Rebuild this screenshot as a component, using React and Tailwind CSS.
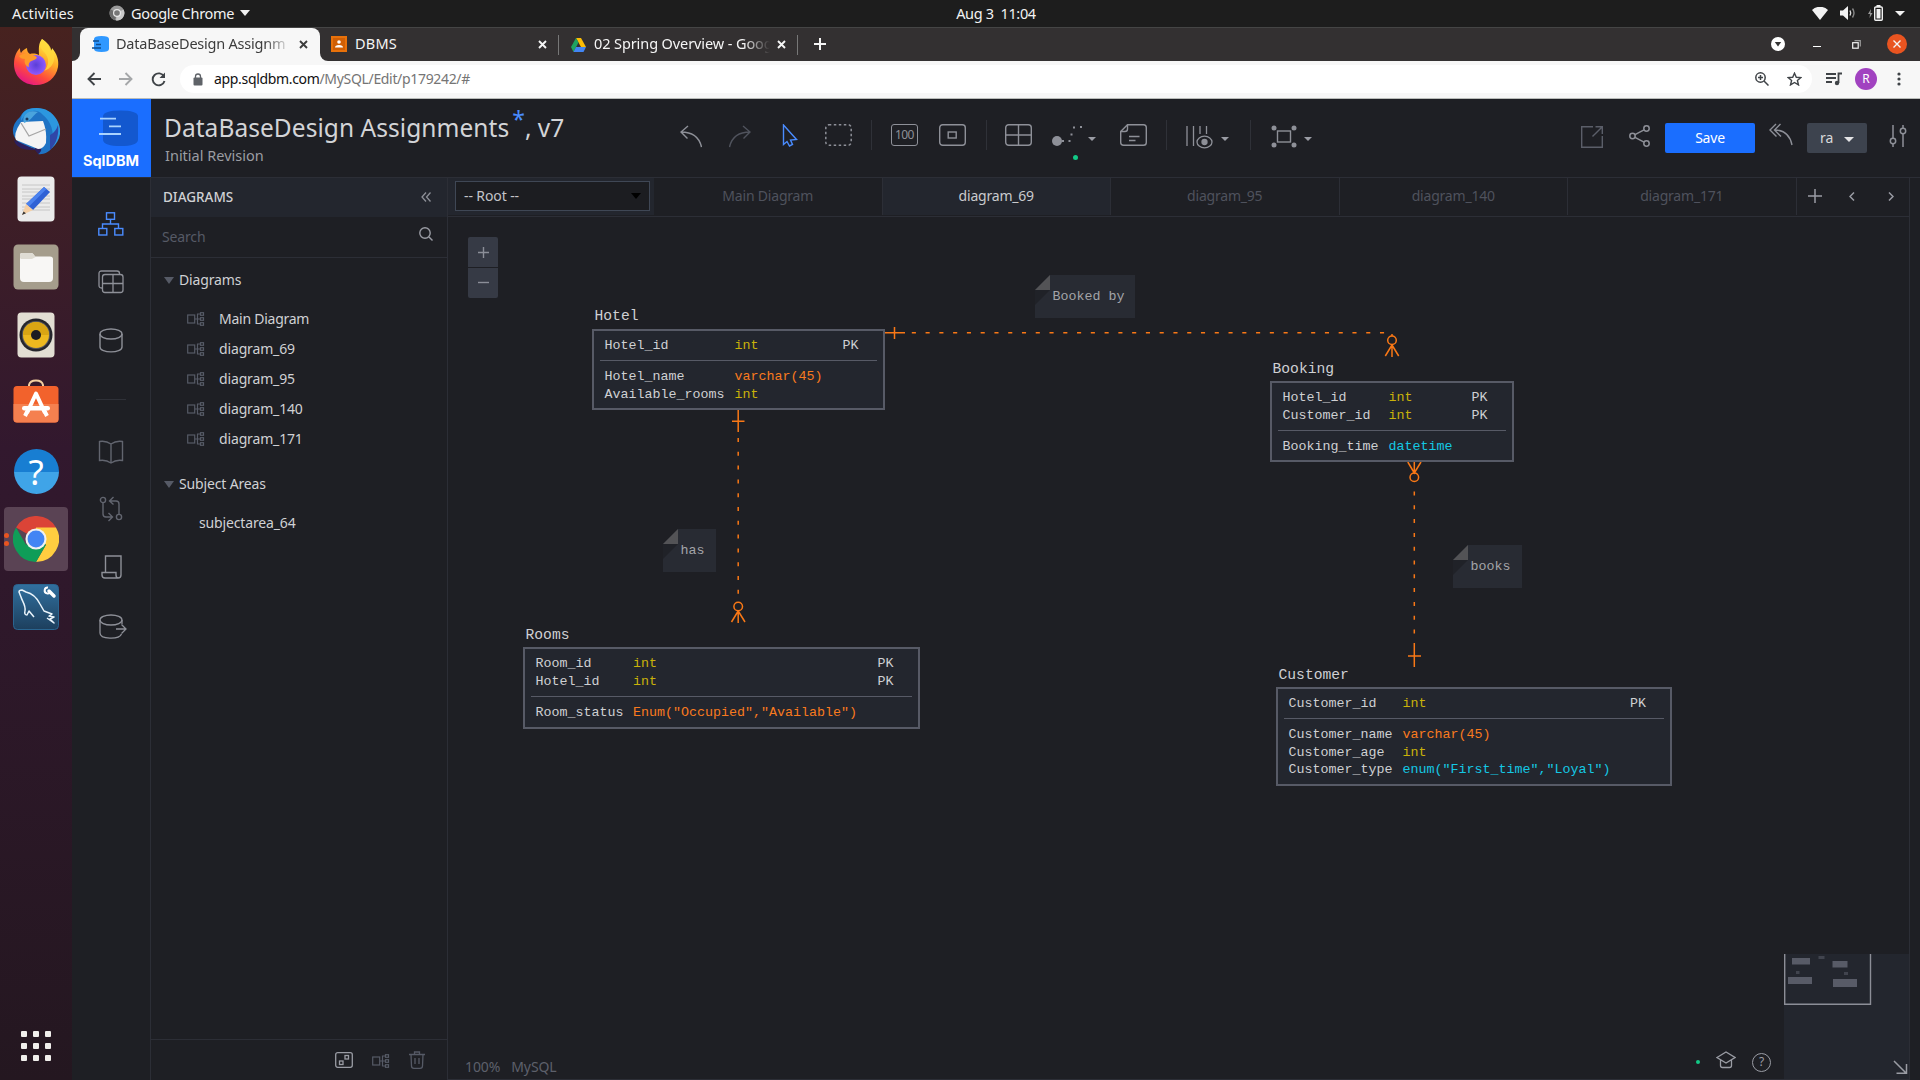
import React from "react";

const Svg = ({ w, h, className = "", children, sw = 1.4, vb }) => (
  <svg
    width={w}
    height={h}
    viewBox={vb || `0 0 ${w} ${h}`}
    fill="none"
    stroke="currentColor"
    strokeWidth={sw}
    className={"shrink-0 " + className}
  >
    {children}
  </svg>
);

/* ---------- System top bar ---------- */

function TopBar() {
  return (
    <div className="grid h-[27px] grid-cols-3 items-center bg-[#1d1d1d] pb-px text-[14.5px] leading-none text-[#f2f2f2]">
      <div className="flex items-center">
        <span className="ml-3 w-[97px] tracking-[0.15px]">Activities</span>
        <Svg w={16} h={16} sw={0}>
          <circle cx="8" cy="8" r="7.5" fill="#9a9a9a" />
          <path d="M8 8 1.5 4.2A7.5 7.5 0 0 0 6 15.2Z" fill="#6c6c6c" />
          <path d="M8 8 14.5 4.5A7.5 7.5 0 0 1 7 15.4Z" fill="#c9c9c9" />
          <circle cx="8" cy="8" r="4" fill="#e8e8e8" />
          <circle cx="8" cy="8" r="2.8" fill="#777" />
        </Svg>
        <span className="ml-1.5 w-[109px] whitespace-nowrap tracking-[-0.3px]">Google Chrome</span>
        <Svg w={10} h={6} sw={0}>
          <path d="M0 0H10L5 6Z" fill="#f2f2f2" />
        </Svg>
      </div>
      <div className="flex justify-center">
        <span className="ml-[72px] whitespace-pre tracking-[-0.35px]">Aug 3  11:04</span>
      </div>
      <div className="flex items-center justify-end pr-[15px]">
        <Svg w={16} h={13} sw={0}>
          <path d="M8 13 0 3A11.5 11.5 0 0 1 16 3Z" fill="#f2f2f2" />
        </Svg>
        <Svg w={16} h={14} className="ml-[12px]">
          <path d="M0 4.5H3L8 0V14L3 9.500H0Z" fill="#f2f2f2" stroke="none" />
          <path d="M10 4.500Q11.500 7 10 9.500" stroke="#ddd" />
          <path d="M12.500 2.500Q15.500 7 12.500 11.500" stroke="#888" />
        </Svg>
        <Svg w={16} h={16} className="ml-[12px]">
          <path d="M3 4 0 9H2L1.500 13 4.500 8H2.500Z" fill="#999" stroke="none" />
          <rect x="6.700" y="2" width="7.600" height="13.300" rx="1" stroke="#f2f2f2" />
          <path d="M8.500 4H12.500V13.500H8.500ZM8.500 0H12.500V2H8.500Z" fill="#f2f2f2" stroke="none" />
        </Svg>
        <Svg w={10} h={5} sw={0} className="ml-[11px]">
          <path d="M0 0H10L5 5Z" fill="#f2f2f2" />
        </Svg>
      </div>
    </div>
  );
}

/* ---------- Dock ---------- */

const Firefox = () => (
  <Svg w={46} h={48} sw={0} vb="0 0 46 48" className="-mt-[2px]">
    <defs>
      <linearGradient id="ffx" x1=".8" y1=".1" x2=".3" y2="1">
        <stop offset="0" stopColor="#fff14a" />
        <stop offset=".35" stopColor="#ffab27" />
        <stop offset=".7" stopColor="#ff4a3d" />
        <stop offset="1" stopColor="#e31587" />
      </linearGradient>
      <radialGradient id="ffp">
        <stop offset="0" stopColor="#5b3fd6" />
        <stop offset="1" stopColor="#9059ff" />
      </radialGradient>
    </defs>
    <path
      d="M29 1c6 4 8 8 9 12 1-1 1-2 1-3 5 6 7 12 6 19-2 11-11 18-22 18C10 47 1 38 1 26 1 19 3 14 7 10c0 2 0 3 1 5 2-3 4-4 6-5 0 3 1 5 3 6 4-1 7 0 9 1 0-6-1-11 3-16Z"
      fill="url(#ffx)"
    />
    <circle cx="23" cy="27" r="10" fill="url(#ffp)" />
    <path d="M6 18c5-4 12-2 16 0 3 1 2 3-1 4-4 1-6 3-5 7-4-1-5-5-4-8-3 0-5-1-6-3Z" fill="#ff9a28" />
    <path d="M29 1c-3 5-2 9 2 13 6 6 5 14 0 19 9-3 14-13 7-22C37 7 33 4 29 1Z" fill="#ffd93c" opacity=".8" />
  </Svg>
);

const Thunderbird = () => (
  <Svg w={48} h={48} sw={0} vb="0 0 48 48">
    <path d="M17 2C25-1 38 2 44 12c6 12 3 22-4 29-3 4-9 7-14 6 2-3-2-5-7-6C7 38 0 31 1 22c1-6 4-9 7-12 2-4 5-7 9-8Z" fill="#1f73c4" />
    <path d="M9 14C14 4 24 0 31 8c8 7 12 16 9 33 8-7 11-17 5-28C39 2 28-1 17 2 11 4 9 8 9 14Z" fill="#2c97df" />
    <path d="M38 28c4-2 7-6 8-10 1 9-1 18-8 25Z" fill="#2f46a8" />
    <path d="M2 33 22 42 27 39C31 41 29 46 26 47L23 43C14 43 4 42 2 33Z" fill="#2b1f5e" />
    <path d="m9 15 22-1q4 10 3 22-3 6-8 6L4 33Q1 27 9 15Z" fill="#f4f4f4" />
    <path d="m9 16 8 13 17-7" fill="none" stroke="#a6a6a6" strokeWidth="1.300" />
    <path d="M13 8c4-5 9-4 13-3-5 3-7 9-14 11-1-3-1-5 1-8Z" fill="#4aa4dd" />
    <circle cx="15" cy="12" r="1.500" fill="#17395f" />
  </Svg>
);

const Editor = () => (
  <Svg w={38} h={46} sw={0}>
    <rect x=".5" y=".5" width="37" height="45" rx="4" fill="#ebebeb" />
    {[9, 13, 16, 20, 23, 27, 31, 34].map((y) => (
      <path key={y} d={`M5 ${y}H33`} stroke="#c6c6c6" strokeWidth="1" />
    ))}
    <path d="M27 11 33 16 16 34 9 28Z" fill="#2f61d5" />
    <path d="M27 11 29.500 13 12 30.500 9 28Z" fill="#4b82ee" />
    <path d="M9 28 16 34 5 39Z" fill="#f4cfa6" />
    <path d="M6.500 35.500 9 37.300 5 39Z" fill="#333" />
  </Svg>
);

const Files = () => (
  <Svg w={46} h={46} sw={0}>
    <rect x=".5" y=".5" width="45" height="45" rx="4.500" fill="#a59d8c" />
    <path d="M7 11Q7 9 9 9H18Q20 9 21 11L22 12.500H37Q40 12.500 40 15V34Q40 38 36 38H11Q7 38 7 34Z" fill="#f8f7f5" />
    <path d="M7 14V11Q7 9 9 9H18Q20 9 21 11L22.500 13 19 15H8Z" fill="#dfdcd3" />
  </Svg>
);

const Rhythmbox = () => (
  <Svg w={38} h={46} sw={0}>
    <rect x=".5" y=".5" width="37" height="45" rx="4" fill="#e2ded3" />
    <circle cx="19" cy="23" r="16.500" fill="#25262c" />
    <circle cx="19" cy="23" r="14" fill="#5a5a5e" />
    <circle cx="19" cy="23" r="13" fill="#edb91f" />
    <path d="M6 23a13 13 0 0 1 26 0Z" fill="#d9a514" />
    <circle cx="19" cy="23" r="5" fill="#1c1d22" />
  </Svg>
);

const Software = () => (
  <Svg w={46} h={44} sw={0} className="-mt-[4px]">
    <path d="M16 9V6Q17 1.500 23 1.500T30 6V9" stroke="#f3cfa0" strokeWidth="2" />
    <rect x=".5" y="7" width="45" height="36.500" rx="3.500" fill="#f2622c" />
    <path d="M.5 25H45.500V40Q45.500 43.500 42 43.500H4Q.5 43.500 .5 40Z" fill="#f5804f" />
    <path d="M14 34 23 14.500 32 34" stroke="#fff" strokeWidth="4" strokeLinejoin="round" />
    <rect x="9" y="27" width="28" height="4.500" rx="2.200" fill="#fff" />
    <path d="M12 37 15 31M34 37 31 31" stroke="#fff" strokeWidth="4" />
  </Svg>
);

const Help = () => (
  <div className="flex h-[45px] w-[45px] items-center justify-center rounded-full bg-gradient-to-b from-[#187ed2] from-50% to-[#3fa4e8] to-50% text-[35px] leading-none text-white">
    ?
  </div>
);

const ChromeLogo = () => (
  <Svg w={46} h={46} sw={0} vb="0 0 48 48">
    <path d="M24 24 3.200 12A24 24 0 0 1 44.800 12Z" fill="#db4437" />
    <path d="M24 24V12H44.800A24 24 0 0 1 24 48L34.400 30Z" fill="#ffcd40" />
    <path d="M24 24 34.400 30 24 48A24 24 0 0 1 3.200 12L13.600 30Z" fill="#0f9d58" />
    <circle cx="24" cy="24" r="11" fill="#f1f1f1" />
    <circle cx="24" cy="24" r="8.800" fill="#4285f4" />
  </Svg>
);

const Workbench = () => (
  <Svg w={46} h={46}>
    <defs>
      <linearGradient id="wb" x1="0" y1="0" x2="0" y2="1">
        <stop offset="0" stopColor="#31709f" />
        <stop offset="1" stopColor="#1d3f5d" />
      </linearGradient>
    </defs>
    <rect x=".5" y=".5" width="45" height="45" rx="4" fill="url(#wb)" stroke="#2a6590" strokeWidth="1" />
    <path
      d="M12 27C13 21 9 17 8 13L6 8Q6 6 9 6L13 8Q22 10 27 20L31 27 39 30 36 32 41 33 37 35 41 39 34 34M12 27Q11 31 14 31L16 27 21 33"
      stroke="#e9f3fa"
      strokeWidth="1.500"
      strokeLinejoin="round"
    />
    <path d="M36 7 41 12" stroke="#fff" strokeWidth="3.500" strokeLinecap="round" />
    <path d="M35 3.500A3 3 0 1 0 37.500 7.500" stroke="#fff" strokeWidth="2" />
  </Svg>
);

const DOCK = [Firefox, Thunderbird, Editor, Files, Rhythmbox, Software, Help, ChromeLogo, Workbench];

function Dock() {
  return (
    <div className="flex w-[72px] shrink-0 flex-col items-center bg-gradient-to-b from-[#47221f] via-[#32182e] via-40% to-[#241720] pt-[4px]">
      <div className="flex flex-col gap-1">
        {DOCK.map((Icon, i) => (
          <div
            key={i}
            className={
              "relative flex h-16 w-16 items-center justify-center rounded-[4px] " +
              (i === 7 ? "bg-[#5a4354]" : "")
            }
          >
            <Icon />
            {i === 7 && (
              <div className="absolute top-[26px] left-0 flex flex-col gap-[3px]">
                <div className="h-[5px] w-[5px] rounded-full bg-[#e95420]" />
                <div className="h-[5px] w-[5px] rounded-full bg-[#e95420]" />
              </div>
            )}
          </div>
        ))}
      </div>
      <div className="mt-auto mb-[19px] grid grid-cols-3 gap-[6px]">
        {Array.from({ length: 9 }, (_, i) => (
          <div key={i} className="h-[6px] w-[6px] rounded-[1px] bg-[#f1efec]" />
        ))}
      </div>
    </div>
  );
}

/* ---------- Browser chrome ---------- */

const X = ({ className = "" }) => (
  <Svg w={9} h={9} sw={1.9} className={className}>
    <path d="M1 1 8 8M8 1 1 8" />
  </Svg>
);

function TabStrip() {
  return (
    <div className="flex h-[34px] items-center border-t border-[#454545] bg-[#333031] text-[14.5px] leading-none text-[#f5f5f5]">
      <div className="h-[33px] w-2 bg-[#f7f7f7]">
        <div className="h-full rounded-br-[8px] bg-[#333031]" />
      </div>
      <div className="flex h-[33px] w-[240px] items-center rounded-t-[8px] bg-[#f7f7f7] pb-px pl-3 text-[#3c3c3c]">
        <Svg w={17} h={18} sw={0}>
          <path d="M2 4Q2 1 9.500 1T17 4V14Q17 17 9.500 17T2 14Z" fill="#2f98ff" />
          <path d="M1 6H7M4 9.500H9M0 13H9" stroke="#0e4b8e" strokeWidth="1.300" />
        </Svg>
        <div className="ml-[7px] w-[175px] pb-[2px] whitespace-nowrap tracking-[-0.22px] [mask-image:linear-gradient(to_right,black_85%,transparent)]">
          <span className="leading-5">DataBaseDesign Assignm</span>
        </div>
        <X className="ml-[8px]" />
      </div>
      <div className="h-[33px] w-2 bg-[#f7f7f7]">
        <div className="h-full rounded-bl-[8px] bg-[#333031]" />
      </div>
      <div className="mb-px ml-[3px] flex h-4 w-4 items-center justify-center bg-[#e8710a]">
        <Svg w={12} h={12} sw={0}>
          <rect width="12" height="12" fill="#d05f05" />
          <circle cx="6" cy="4" r="1.800" fill="#fff" />
          <path d="M2 9.500Q2 7 6 7T10 9.500Z" fill="#fff" />
        </Svg>
      </div>
      <span className="ml-2 w-[183px] pb-[3px] tracking-[0.2px]">DBMS</span>
      <X className="mb-px" />
      <div className="ml-[11px] h-5 w-px bg-[#777]" />
      <Svg w={15} h={14} sw={0} className="ml-[12px]">
        <path d="M5 0H10L15 9H10Z" fill="#fbbc05" />
        <path d="M5 0 0 9 2.500 14 7.500 4.500Z" fill="#1ea362" />
        <path d="M5 9H15L12.500 14H2.500Z" fill="#4285f4" />
      </Svg>
      <div className="ml-[8px] w-[176px] pb-[3px] whitespace-nowrap tracking-[-0.1px] [mask-image:linear-gradient(to_right,black_85%,transparent)]">
        <span className="leading-5">02 Spring Overview - Goog</span>
      </div>
      <X className="mb-px ml-[7px]" />
      <div className="ml-[11px] h-5 w-px bg-[#777]" />
      <Svg w={12} h={12} sw={2} className="mb-px ml-[16px]">
        <path d="M6 0V12M0 6H12" />
      </Svg>
      <div className="mr-[13px] mb-px ml-auto flex items-center">
        <Svg w={14} h={14} sw={0}>
          <circle cx="7" cy="7" r="7" fill="#fff" />
          <path d="M3.800 5H10.200L7 9.500Z" fill="#333" />
        </Svg>
        <div className="mt-[5px] ml-[28px] h-px w-[8px] bg-white" />
        <Svg w={9} h={9} sw={1.2} className="ml-[31px]">
          <path d="M2.500 .7H8.300V6.500" stroke="#999" />
          <rect x=".7" y="2.700" width="5.500" height="5.500" />
        </Svg>
        <div className="ml-[26px] flex h-5 w-5 items-center justify-center rounded-full bg-[#e95420]">
          <Svg w={8} h={8} sw={1.4}>
            <path d="M.5 .5 7.500 7.500M7.500 .5 .5 7.500" />
          </Svg>
        </div>
      </div>
    </div>
  );
}

function AddressBar() {
  return (
    <div className="flex h-[38px] items-center border-b border-[#b9bcb9] bg-[#f7f7f7] pb-px text-[#3f4347]">
      <Svg w={14} h={14} sw={1.9} className="ml-[15px]">
        <path d="M14 7H1.500M7.500 1 1.500 7 7.500 13" />
      </Svg>
      <Svg w={14} h={14} sw={1.9} className="ml-[18px] text-[#a5a7a9]">
        <path d="M0 7H12.500M6.500 1 12.500 7 6.500 13" />
      </Svg>
      <Svg w={15} h={15} sw={1.9} className="ml-[18px]">
        <path d="M13 4.500A6 6 0 1 0 13.500 9" />
        <path d="M14 .5V6H8.500Z" fill="currentColor" stroke="none" />
      </Svg>
      <div className="ml-[14px] flex h-7 w-[1632px] items-center rounded-full bg-white">
        <Svg w={10} h={13} sw={0} className="ml-[13px]">
          <rect x=".5" y="4.500" width="9" height="8" rx="1" fill="#5f6368" />
          <path d="M2.500 5V3.500a2.500 2.500 0 0 1 5 0V5" stroke="#5f6368" strokeWidth="1.300" />
        </Svg>
        <span className="ml-[11px] pb-px text-[14px] leading-none tracking-[-0.33px] text-[#757575]">
          <span className="text-[#111]">app.sqldbm.com</span>/MySQL/Edit/p179242/#
        </span>
        <Svg w={14} h={14} sw={1.5} className="mr-[18px] ml-auto">
          <circle cx="5.500" cy="5.500" r="4.700" />
          <path d="M9 9 13.500 13.500M3 5.500H8M5.500 3V8" />
        </Svg>
        <Svg w={15} h={14} sw={1.400} className="mr-[10px]">
          <path d="M7.500 1.200 9.300 5.300 13.900 5.600 10.400 8.500 11.500 12.900 7.500 10.500 3.500 12.900 4.600 8.500 1.100 5.600 5.700 5.300Z" />
        </Svg>
      </div>
      <Svg w={16} h={14} sw={1.800} className="ml-[14px]">
        <path d="M0 2H10M0 6H10M0 10H6" />
        <path d="M16 1.500H12.500V11" />
        <circle cx="11" cy="11" r="2.200" fill="currentColor" stroke="none" />
      </Svg>
      <div className="ml-[13px] flex h-[22px] w-[22px] items-center justify-center rounded-full bg-[#a142c0] text-[12px] leading-none text-white">
        R
      </div>
      <Svg w={4} h={14} sw={0} className="ml-[20px]">
        <circle cx="2" cy="2" r="1.600" fill="currentColor" />
        <circle cx="2" cy="7" r="1.600" fill="currentColor" />
        <circle cx="2" cy="12" r="1.600" fill="currentColor" />
      </Svg>
    </div>
  );
}

/* ---------- Application header ---------- */

const Caret = ({ className = "" }) => (
  <Svg w={8} h={4} sw={0} className={className}>
    <path d="M0 0H8L4 4Z" fill="#9a9ca4" />
  </Svg>
);

const Divider = ({ className = "" }) => <div className={"h-[30px] w-px bg-[#2f3138] " + className} />;

function Header() {
  return (
    <div className="flex h-[79px] border-b border-[#2c2e36]">
      <div className="flex h-[78px] w-[79px] shrink-0 flex-col bg-[#1a6eff]">
        <Svg w={40} h={37} sw={0} className="mt-[11px] ml-[27px]">
          <path d="M4 6Q5 .5 21.500 .5T39 6V30Q38 36 21.500 36T4 30Z" fill="#1358cf" />
          <path d="M1 8.700H17M10 16.300H22M0 24H22" stroke="#a9d3ff" strokeWidth="1.800" />
        </Svg>
        <span className="mt-[6px] pr-[1px] text-center font-['Inter'] text-[14.500px] leading-4 font-bold text-white">
          SqlDBM
        </span>
      </div>
      <div className="ml-[13px] w-[516px] shrink-0">
        <div className="mt-[11px] text-[24.500px] leading-[36px] whitespace-nowrap text-[#d3d4d7]">
          <span className="tracking-[0.050px]">DataBaseDesign Assignments</span>
          <span className="relative -top-[9px] ml-[3px] text-[23px] leading-none text-[#4a8cff]">*</span>
          <span>, v7</span>
        </div>
        <div className="mt-[-1px] ml-px text-[14.500px] leading-5 text-[#9b9da3]">Initial Revision</div>
      </div>
      <div className="mt-[21px] flex h-[30px] items-center text-[#8e9098]">
        <Svg w={22} h={23} className="mt-[2px]">
          <path d="M8 1 1 7 7.500 13.500M1 7Q18 7 21.500 22" />
        </Svg>
        <Svg w={22} h={23} className="mt-[2px] ml-[27px] text-[#50535d]">
          <path d="M14 1 21 7 14.500 13.500M21 7Q4 7 .5 22" />
        </Svg>
        <Svg w={16} h={23} className="ml-[31px] text-[#4a8cff]">
          <path d="M1.500 1V20.500L5 17.500 7.500 22 10.500 20.500 8.500 16 14.500 15.500Z" />
        </Svg>
        <Svg w={27} h={22} className="ml-[27px]" sw={1.500}>
          <rect x=".8" y=".8" width="25.400" height="20.400" rx="3" strokeDasharray="2.500 2.500" />
        </Svg>
        <Divider className="ml-[19px]" />
        <div className="ml-[19px] flex h-[22px] w-[27px] items-center justify-center rounded-[3px] border-[1.500px] border-current text-[12px] leading-none tracking-[-0.600px]">
          100
        </div>
        <Svg w={27} h={22} className="ml-[21px]" sw={1.400}>
          <rect x=".7" y=".7" width="25.600" height="20.600" rx="3" />
          <rect x="9.200" y="8" width="8" height="6" />
        </Svg>
        <Divider className="ml-[20px]" />
        <Svg w={27} h={22} className="ml-[18px]" sw={1.400}>
          <rect x=".7" y=".7" width="25.600" height="20.600" rx="3" />
          <path d="M13.500 .7V21.300M.7 11H26.300" />
        </Svg>
        <div className="relative ml-[20px]">
          <Svg w={32} h={22} sw={0}>
            <g fill="currentColor">
              <circle cx="5" cy="17" r="5" />
              <rect x="10" y="16" width="2" height="2" />
              <rect x="16.500" y="16" width="2" height="2" />
              <rect x="18.500" y="9.500" width="2" height="2" />
              <rect x="21" y="2.500" width="2" height="2" />
              <rect x="28" y="2" width="2" height="2" />
            </g>
          </Svg>
          <div className="absolute top-[31px] left-[21px] h-[5px] w-[5px] rounded-full bg-[#12c986]" />
        </div>
        <Caret className="mt-[8px] ml-[4px]" />
        <Svg w={27} h={22} className="ml-[24px]" sw={1.400}>
          <path d="M7.500 .7H23.500Q26.300 .7 26.300 3.500V18.500Q26.300 21.300 23.500 21.300H3.500Q.7 21.300 .7 18.500V7.500Z" />
          <path d="M7.500 .7V5Q7.500 7.500 5 7.500H.7M9 12.500H19.500M9 16.500H15.500" />
        </Svg>
        <Divider className="ml-[19px]" />
        <Svg w={27} h={24} className="mt-[3px] ml-[19px]" sw={1.300}>
          <path d="M1 1V21M7.500 1V21M14 1V9M20.500 1V9" />
          <ellipse cx="18.500" cy="17" rx="7.500" ry="5.800" />
          <circle cx="18.500" cy="17" r="2.500" fill="currentColor" />
        </Svg>
        <Caret className="mt-[8px] ml-[8px]" />
        <Divider className="ml-[21px]" />
        <Svg w={26} h={23} className="mt-[2px] ml-[20px]" sw={1.400}>
          <rect x="6.500" y="6" width="13" height="11" />
          <g fill="currentColor" stroke="none">
            <circle cx="3" cy="3" r="2.500" />
            <circle cx="23" cy="3" r="2.500" />
            <circle cx="3" cy="20" r="2.500" />
            <circle cx="23" cy="20" r="2.500" />
          </g>
        </Svg>
        <Caret className="mt-[8px] ml-[7px]" />
      </div>
      <div className="mt-[24px] mr-[13px] ml-auto flex h-[30px] items-center text-[#8e9098]">
        <Svg w={22} h={22} className="mb-[3px] text-[#5b5e69]" sw={1.400}>
          <path d="M12 .7H.7V21.300H21.300V10M14.500 .7H21.300V8M21.300 .7 11.500 10.500" />
        </Svg>
        <Svg w={21} h={22} className="mb-[4px] ml-[26px]" sw={1.500}>
          <circle cx="3.500" cy="11" r="2.700" />
          <circle cx="17.500" cy="3.500" r="2.700" />
          <circle cx="17.500" cy="18.500" r="2.700" />
          <path d="M6 9.700 15 4.900M6 12.300 15 17.100" />
        </Svg>
        <div className="ml-[15px] flex h-[30px] w-[90px] items-center justify-center rounded-[2px] bg-[#1a6eff] text-[14px] leading-none tracking-[-0.200px] text-white">
          Save
        </div>
        <Svg w={24} h={23} className="mb-[7px] ml-[14px]">
          <path d="M7 1 1 7 7.500 13.500M11.500 1 5.500 7 12 13.500M5.500 7Q20 7 23 22" />
        </Svg>
        <div className="ml-[14px] flex h-[30px] w-[60px] items-center rounded-[2px] bg-[#3d434e] pl-[13px] text-[14px] leading-none text-[#d8d9dc]">
          ra
          <Svg w={10} h={5} sw={0} className="mt-[2px] ml-[11px]">
            <path d="M0 0H10L5 5Z" fill="#e4e4e6" />
          </Svg>
        </div>
        <Svg w={18} h={22} className="mb-[4px] ml-[22px]" sw={1.500}>
          <path d="M4 0V13M4 19V22M14 0V3M14 9V22" />
          <circle cx="4" cy="16" r="2.700" />
          <circle cx="14" cy="6" r="2.700" />
        </Svg>
      </div>
    </div>
  );
}

/* ---------- Left rail ---------- */

function Rail() {
  return (
    <div className="flex w-[79px] shrink-0 flex-col items-center border-r border-[#2c2e36] pt-[34px] text-[#8e9098]">
      <Svg w={26} h={24} className="-ml-px text-[#4a8cff]" sw={1.400}>
        <rect x="8.500" y=".8" width="8" height="6.500" />
        <rect x=".8" y="16.500" width="8" height="6.500" />
        <rect x="16.800" y="16.500" width="8" height="6.500" />
        <path d="M12.500 7.500V12M4.500 16.500V12H20.500V16.500" />
      </Svg>
      <Svg w={26} h={24} className="mt-[34px]" sw={1.300}>
        <path d="M4.500 18H3.500Q1 18 1 15.500V3.500Q1 1 3.500 1H19Q21.500 1 21.500 3.500V4.500" />
        <rect x="4.500" y="4.500" width="20.500" height="18" rx="2.500" />
        <path d="M15 4.500V22.500M4.500 13.500H25" />
      </Svg>
      <Svg w={24} h={25} className="mt-[34px]" sw={1.400}>
        <ellipse cx="12" cy="6" rx="11" ry="5" />
        <path d="M1 6V19C1 25.500 23 25.500 23 19V6" />
      </Svg>
      <div className="mt-[46px] h-px w-[30px] bg-[#2f3138]" />
      <Svg w={26} h={24} className="mt-[40px] text-[#62656f]" sw={1.400}>
        <path d="M13 4Q8 .5 1.500 1.500V20.500Q8 19.500 13 23 18 19.500 24.500 20.500V1.500Q18 .5 13 4ZM13 4V23" />
      </Svg>
      <Svg w={24} h={26} className="mt-[32px] text-[#62656f]" sw={1.400}>
        <circle cx="4" cy="4" r="2.600" />
        <circle cx="20" cy="21" r="2.600" />
        <path d="M4 7V18Q4 21 7 21H13M9.500 17 13.500 21 9.500 25M20 18V8Q20 5 17 5H11.500M14.500 1 10.500 5 14.500 8.500" />
      </Svg>
      <Svg w={21} h={24} className="mt-[33px]" sw={1.400}>
        <path d="M4.500 17.500V1H20V20Q20 23 17 23H4Q1 23 1 20V17.500H15V20Q15 23 17.500 23" />
      </Svg>
      <Svg w={28} h={26} className="mt-[35px] ml-[4px]" sw={1.300}>
        <ellipse cx="12" cy="6" rx="11" ry="5" />
        <path d="M1 6V19C1 25.500 20 26 22.500 20M23 6V10M17 15H26.500M22.500 10.500 27 15 22.500 19.500" />
      </Svg>
    </div>
  );
}

/* ---------- Diagram list ---------- */

const DiagramIcon = ({ className = "" }) => (
  <Svg w={18} h={14} sw={1.200} className={"text-[#565a66] " + className}>
    <rect x=".7" y="3" width="7" height="8" />
    <path d="M8 7H13M13.500 2H10.500V12H13.500" />
    <rect x="13.500" y=".7" width="3" height="2.600" />
    <rect x="13.500" y="5.700" width="3" height="2.600" />
    <rect x="13.500" y="10.700" width="3" height="2.600" />
  </Svg>
);

const Group = ({ children }) => (
  <div className="flex h-[30px] items-center pl-[13px]">
    <Svg w={10} h={7} sw={0}>
      <path d="M0 0H10L5 7Z" fill="#565a66" />
    </Svg>
    <span className="ml-[5px] pb-[2px]">{children}</span>
  </div>
);

function Sidebar() {
  return (
    <div className="flex w-[297px] shrink-0 flex-col border-r border-[#2c2e36] text-[14px] tracking-[-0.150px] text-[#d0d1d4]">
      <div className="flex h-[39px] items-center bg-[#23262e] pl-[12px]">
        <span className="text-[13.500px] font-medium tracking-normal">DIAGRAMS</span>
        <Svg w={10} h={10} className="mr-[16px] mb-px ml-auto text-[#8e9098]" sw={1.300}>
          <path d="M5 .5 1 5 5 9.500M9.500 .5 5.500 5 9.500 9.500" />
        </Svg>
      </div>
      <div className="flex h-[41px] items-center border-b border-[#2c2e36] pl-[11px] text-[#565a66]">
        <span className="pb-[2px]">Search</span>
        <Svg w={14} h={14} className="mr-[14px] mb-[6px] ml-auto text-[#9a9ca4]" sw={1.400}>
          <circle cx="6" cy="6" r="5.200" />
          <path d="M10 10 13.500 13.500" />
        </Svg>
      </div>
      <div className="mt-[7px]">
        <Group>Diagrams</Group>
        <div className="mt-[9px]">
          {["Main Diagram", "diagram_69", "diagram_95", "diagram_140", "diagram_171"].map((n) => (
            <div key={n} className="flex h-[30px] items-center pl-[36px]">
              <DiagramIcon />
              <span className={"ml-[14px] pb-[2px] " + (n === "Main Diagram" ? "tracking-[-0.250px]" : "")}>{n}</span>
            </div>
          ))}
        </div>
        <div className="mt-[15px]">
          <Group>Subject Areas</Group>
        </div>
        <div className="mt-[9px] flex h-[30px] items-center pb-[2px] pl-[48px]">subjectarea_64</div>
      </div>
      <div className="mt-auto flex h-[41px] items-center border-t border-[#2c2e36] pl-[184px]">
        <Svg w={18} h={16} className="text-[#9a9ca4]" sw={1.300}>
          <rect x=".7" y=".7" width="16.600" height="14.600" rx="2" />
          <rect x="4.500" y="9" width="3.500" height="3.500" />
          <rect x="10" y="3.500" width="3.500" height="3.500" />
        </Svg>
        <DiagramIcon className="mt-[2px] ml-[19px]" />
        <Svg w={16} h={18} className="ml-[19px] text-[#565a66]" sw={1.300}>
          <path d="M0 3.500H16M5.500 3.500V1H10.500V3.500M2 3.500 2.500 15Q2.500 17.300 5 17.300H11Q13.500 17.300 13.500 15L14 3.500M6 7V13M10 7V13" />
        </Svg>
      </div>
    </div>
  );
}

/* ---------- Canvas ---------- */

function CanvasTabs() {
  return (
    <div className="flex h-[39px] border-b border-[#2c2e36]">
      <div className="flex h-[37px] w-[206px] shrink-0 items-center bg-[#23262e] pb-px pl-[7px]">
        <div className="flex h-[30px] w-[195px] items-center border border-[#3f4755] bg-[#1c1d21] pl-[8px] text-[14px] leading-none text-[#c3c4c8]">
          <span className="pb-px tracking-[-0.100px]">-- Root --</span>
          <Svg w={10} h={6} sw={0} className="mr-[8px] ml-auto">
            <path d="M0 0H10L5 6Z" fill="#000" />
          </Svg>
        </div>
      </div>
      {["Main Diagram", "diagram_69", "diagram_95", "diagram_140", "diagram_171"].map((n) => (
        <div
          key={n}
          className={
            "flex h-[37px] w-[228.500px] shrink-0 items-center justify-center border-r border-[#2c2e36] pb-[3px] text-[14px] tracking-[-0.200px] " +
            (n === "diagram_69" ? "bg-[#23262e] text-[#c9cacd]" : "text-[#4f525d]")
          }
        >
          {n}
        </div>
      ))}
      <div className="flex h-[37px] items-center pb-px text-[#9a9ca4]">
        <Svg w={14} h={14} className="ml-[11px]" sw={1.500}>
          <path d="M7 0V14M0 7H14" />
        </Svg>
        <Svg w={6} h={9} className="ml-[27px]" sw={1.500}>
          <path d="M5 .5 1 4.500 5 8.500" />
        </Svg>
        <Svg w={6} h={9} className="ml-[33px]" sw={1.500}>
          <path d="M1 .5 5 4.500 1 8.500" />
        </Svg>
      </div>
    </div>
  );
}

const COLORS = { y: "text-[#c9b20a]", o: "text-[#f97a1e]", c: "text-[#14c8e4]" };

const TABLES = [
  {
    name: "Hotel", x: 592, y: 329, w: 293, h: 81, tx: 130, px: 239, lift: 1,
    keys: [["Hotel_id", "int", "y"]],
    cols: [["Hotel_name", "varchar(45)", "o"], ["Available_rooms", "int", "y"]],
  },
  {
    name: "Rooms", x: 523, y: 647, w: 397, h: 82, tx: 97.5, px: 343,
    keys: [["Room_id", "int", "y"], ["Hotel_id", "int", "y"]],
    cols: [["Room_status", 'Enum("Occupied","Available")', "o"]],
  },
  {
    name: "Booking", x: 1270, y: 381, w: 244, h: 81, tx: 106, px: 190,
    keys: [["Hotel_id", "int", "y"], ["Customer_id", "int", "y"]],
    cols: [["Booking_time", "datetime", "c"]],
  },
  {
    name: "Customer", x: 1276, y: 687, w: 396, h: 99, tx: 114, px: 342.5,
    keys: [["Customer_id", "int", "y"]],
    cols: [
      ["Customer_name", "varchar(45)", "o"],
      ["Customer_age", "int", "y"],
      ["Customer_type", 'enum("First_time","Loyal")', "c"],
    ],
  },
];

const Row = ({ row, t, pk }) => (
  <div className="flex h-[17.500px] pl-[10.500px] leading-[17.500px] whitespace-nowrap">
    <span className="shrink-0" style={{ width: t.tx }}>{row[0]}</span>
    <span className={"shrink-0 " + COLORS[row[2]]} style={{ width: t.px - t.tx - 1 }}>{row[1]}</span>
    {pk && <span>PK</span>}
  </div>
);

/* Node positions are stored in window coordinates; the canvas begins at (448, 217). */
const OX = 448;
const OY = 217;

const Table = ({ t }) => (
  <div
    className="absolute font-['Liberation_Mono',monospace] text-[#cfd0d3]"
    style={{ left: t.x - OX, top: t.y - OY - 22 - (t.lift || 0), width: t.w }}
  >
    <div className="pl-[2.500px] text-[14.667px] leading-[20px]" style={{ height: 22 + (t.lift || 0) }}>
      {t.name}
    </div>
    <div className="border-2 border-[#575a66] bg-[#23262e] pt-[6px] text-[13.333px]" style={{ height: t.h }}>
      {t.keys.map((r) => <Row key={r[0]} row={r} t={t} pk />)}
      <div className="mx-[6px] mt-[5.500px] mb-[7px] h-px bg-[#575a66]" />
      {t.cols.map((r) => <Row key={r[0]} row={r} t={t} />)}
    </div>
  </div>
);

const NOTES = [
  { text: "Booked by", x: 1035, y: 275, w: 100 },
  { text: "has", x: 663, y: 529, w: 53 },
  { text: "books", x: 1453, y: 545, w: 69 },
];

const Note = ({ n }) => (
  <div
    className="absolute h-[43px] bg-[#282b33] pt-[13px] pl-[17.500px] font-['Liberation_Mono',monospace] text-[13.333px] leading-[18px] whitespace-nowrap text-[#a3a4a8]"
    style={{ left: n.x - OX, top: n.y - OY, width: n.w }}
  >
    <svg width="15" height="30" className="absolute top-0 left-0">
      <path d="M0 0H15L0 15Z" fill="#1e1f24" />
      <path d="M15 0V15H0Z" fill="#535356" />
      <path d="M0 15H15L0 30Z" fill="#202228" />
    </svg>
    {n.text}
  </div>
);

function Connectors() {
  return (
    <svg
      width="1461"
      height="862"
      viewBox="448 217 1461 862"
      fill="none"
      stroke="#f97816"
      strokeWidth="1.500"
      className="absolute top-0 left-0"
    >
      <path d="M885 332.700H905M894.500 327V339" />
      <path d="M911.800 332.700H1385" strokeDasharray="4.100 9.670" />
      <circle cx="1392" cy="340.300" r="4.300" />
      <path d="M1392 334V336M1392 345V357M1392 345 1385.300 356M1392 345 1398.700 356" />

      <path d="M738.200 410V432M732 421.300H744.500" />
      <path d="M738.200 438V594" strokeDasharray="4 9.800" />
      <circle cx="738.200" cy="606.500" r="4.300" />
      <path d="M738.200 611V623M738.200 611 731.500 622M738.200 611 745 622" />

      <path d="M1414.300 462V473M1407.800 462 1414.300 473 1421 462" />
      <circle cx="1414.300" cy="477.300" r="4.300" />
      <path d="M1414.300 491.500V634" strokeDasharray="4 9.800" />
      <path d="M1414.300 643V667M1408 656H1421" />
    </svg>
  );
}

function Minimap() {
  return (
    <div className="absolute right-0 bottom-0 h-[125px] w-[125px] bg-[#23262e]">
      <svg width="125" height="125">
        <path d="M.7 0V50.200H86.500V0" fill="none" stroke="#8c8e97" strokeWidth="1.400" />
        <g fill="#585b67">
          <rect x="8" y="4" width="18" height="6.500" />
          <rect x="48.500" y="7" width="15" height="6.500" />
          <rect x="4" y="23" width="24" height="7" />
          <rect x="49" y="25" width="24" height="8" />
        </g>
        <g fill="#41444e">
          <rect x="34.500" y="2" width="6" height="3" />
          <rect x="12" y="17" width="3.500" height="3" />
          <rect x="60" y="18" width="4" height="3" />
        </g>
        <path d="M110 107 122 119M112.500 119.300H122.500V110" fill="none" stroke="#9a9ca4" strokeWidth="1.500" />
      </svg>
    </div>
  );
}

function Canvas() {
  return (
    <div className="relative min-h-0 flex-1">
      <Connectors />
      {TABLES.map((t) => <Table key={t.name} t={t} />)}
      {NOTES.map((n) => <Note key={n.text} n={n} />)}
      <div className="absolute top-[20px] left-[20px] flex w-[30px] flex-col gap-px text-[#8b8e98]">
        <div className="flex h-[30px] items-center justify-center rounded-t-[2px] bg-[#363a45] pl-px">
          <Svg w={11} h={11}><path d="M5.500 0V11M0 5.500H11" /></Svg>
        </div>
        <div className="flex h-[30px] items-center justify-center rounded-b-[2px] bg-[#363a45] pl-px">
          <Svg w={11} h={11}><path d="M0 4.500H11" /></Svg>
        </div>
      </div>
      <div className="absolute bottom-[2px] left-[17px] flex gap-[11px] text-[14px] leading-5 tracking-[-0.100px] text-[#5d606b]">
        <span>100%</span>
        <span>MySQL</span>
      </div>
      <div className="absolute right-[138px] bottom-[6px] flex items-center text-[#9a9ca4]">
        <div className="h-[4px] w-[4px] rounded-full bg-[#12c986]" />
        <Svg w={20} h={18} className="mb-[4px] ml-[16px]" sw={1.300}>
          <path d="M1 6.500 10 1 19 6.500 10 12ZM4.500 9V14.500Q4.500 16.500 6.500 16.500H13.500Q15.500 16.500 15.500 14.500V9" />
        </Svg>
        <div className="ml-[16px] flex h-[19px] w-[19px] items-center justify-center rounded-full border-[1.500px] border-current text-[12px] leading-none">
          ?
        </div>
      </div>
      <Minimap />
    </div>
  );
}

export default function App() {
  return (
    <div className="flex h-[1080px] w-[1920px] flex-col overflow-hidden bg-[#1e1f24] font-['Noto_Sans',sans-serif]">
      <TopBar />
      <div className="flex min-h-0 flex-1">
        <Dock />
        <div className="flex w-[1848px] flex-col">
          <TabStrip />
          <AddressBar />
          <Header />
          <div className="flex min-h-0 flex-1">
            <Rail />
            <Sidebar />
            <div className="flex w-[1462px] flex-col border-r border-b border-[#2c2e36]">
              <CanvasTabs />
              <Canvas />
            </div>
          </div>
        </div>
      </div>
    </div>
  );
}
